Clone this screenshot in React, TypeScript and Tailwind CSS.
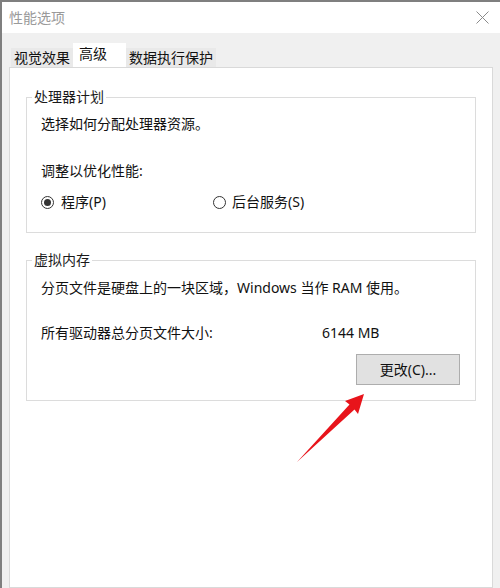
import React from "react";

function Radio({ checked }: { checked: boolean }) {
  return (
    <span className="flex h-[13px] w-[13px] items-center justify-center rounded-full border border-[#333333] bg-white">
      {checked && <span className="h-[7px] w-[7px] rounded-full bg-[#333333]" />}
    </span>
  );
}

function GroupBox({
  title,
  className,
  children,
}: {
  title: string;
  className: string;
  children: React.ReactNode;
}) {
  return (
    <div className={"relative border border-[#dcdcdc] " + className}>
      <span className="absolute left-[5px] top-[-11px] bg-white px-[2px] text-[14px] leading-[20px] text-[#1a1a1a]">
        {title}
      </span>
      {children}
    </div>
  );
}

export default function App() {
  return (
    <div
      className="relative flex h-[588px] w-[500px] flex-col overflow-hidden border-l-2 border-t-2 border-[#7f7f7f] bg-white text-[#111111]"
      style={{ fontFamily: '"Noto Sans", "Noto Sans CJK SC", sans-serif' }}
    >
      {/* title bar */}
      <div className="flex h-[31px] shrink-0 items-center justify-between pl-[7px] pr-[10px]">
        <span className="text-[14px] leading-[20px] text-[#9a9a9a]">性能选项</span>
        <svg width="13" height="13" viewBox="0 0 13 13" className="mr-[1px]">
          <path d="M0.5 0.5 L12.5 12.5 M12.5 0.5 L0.5 12.5" stroke="#8a8a8a" strokeWidth="1" fill="none" />
        </svg>
      </div>

      {/* body */}
      <div className="flex flex-1 flex-col bg-[#f0f0f0]">
        {/* tabs */}
        <div className="flex h-[34px] shrink-0 items-end pl-[9px]">
          <div className="flex h-[19px] w-[62px] items-center justify-center bg-[#e9e9e9] text-[14px] leading-[20px]">
            视觉效果
          </div>
          <div className="flex h-[24px] w-[53px] items-center bg-white pb-[3px] pl-[6px] text-[14px] leading-[20px]">
            高级
          </div>
          <div className="flex h-[19px] w-[90px] items-center justify-center bg-[#e9e9e9] text-[14px] leading-[20px]">
            数据执行保护
          </div>
        </div>

        {/* panel */}
        <div className="ml-[7px] mr-[7px] flex-1 border border-[#d9d9d9] bg-white pl-[16px] pt-[29px]">
          <GroupBox title="处理器计划" className="h-[136px] w-[450px] pl-[14px] pt-[16px]">
            <div className="text-[14px] leading-[20px]">选择如何分配处理器资源。</div>
            <div className="mt-[27px] text-[14px] leading-[20px]">调整以优化性能:</div>
            <div className="mt-[11px] flex h-[20px] items-center text-[14px] leading-[20px]">
              <div className="flex w-[172px] items-center gap-[7px]">
                <Radio checked />
                <span>程序(P)</span>
              </div>
              <div className="flex items-center gap-[6px]">
                <Radio checked={false} />
                <span>后台服务(S)</span>
              </div>
            </div>
          </GroupBox>

          <GroupBox title="虚拟内存" className="mt-[27px] h-[141px] w-[450px] pl-[14px] pt-[17px]">
            <div className="text-[14px] leading-[20px]">分页文件是硬盘上的一块区域，Windows 当作 RAM 使用。</div>
            <div className="mt-[25px] flex text-[14px] leading-[20px]">
              <span className="w-[281px]">所有驱动器总分页文件大小:</span>
              <span>6144 MB</span>
            </div>
            <div className="mt-[11px] flex justify-end pr-[15px]">
              <button className="flex h-[31px] w-[104px] items-center justify-center border border-[#adadad] bg-[#e1e1e1] text-[14px] leading-[20px] text-[#111111]">
                更改(C)...
              </button>
            </div>
          </GroupBox>
        </div>
      </div>

      {/* red arrow annotation */}
      <svg className="pointer-events-none absolute left-[-2px] top-[-2px]" width="500" height="588" viewBox="0 0 500 588">
        <polygon
          points="364,394 358,414 354.5,409.5 297,462 349.5,404.5 345,401"
          fill="#e8141b"
        />
      </svg>
    </div>
  );
}
